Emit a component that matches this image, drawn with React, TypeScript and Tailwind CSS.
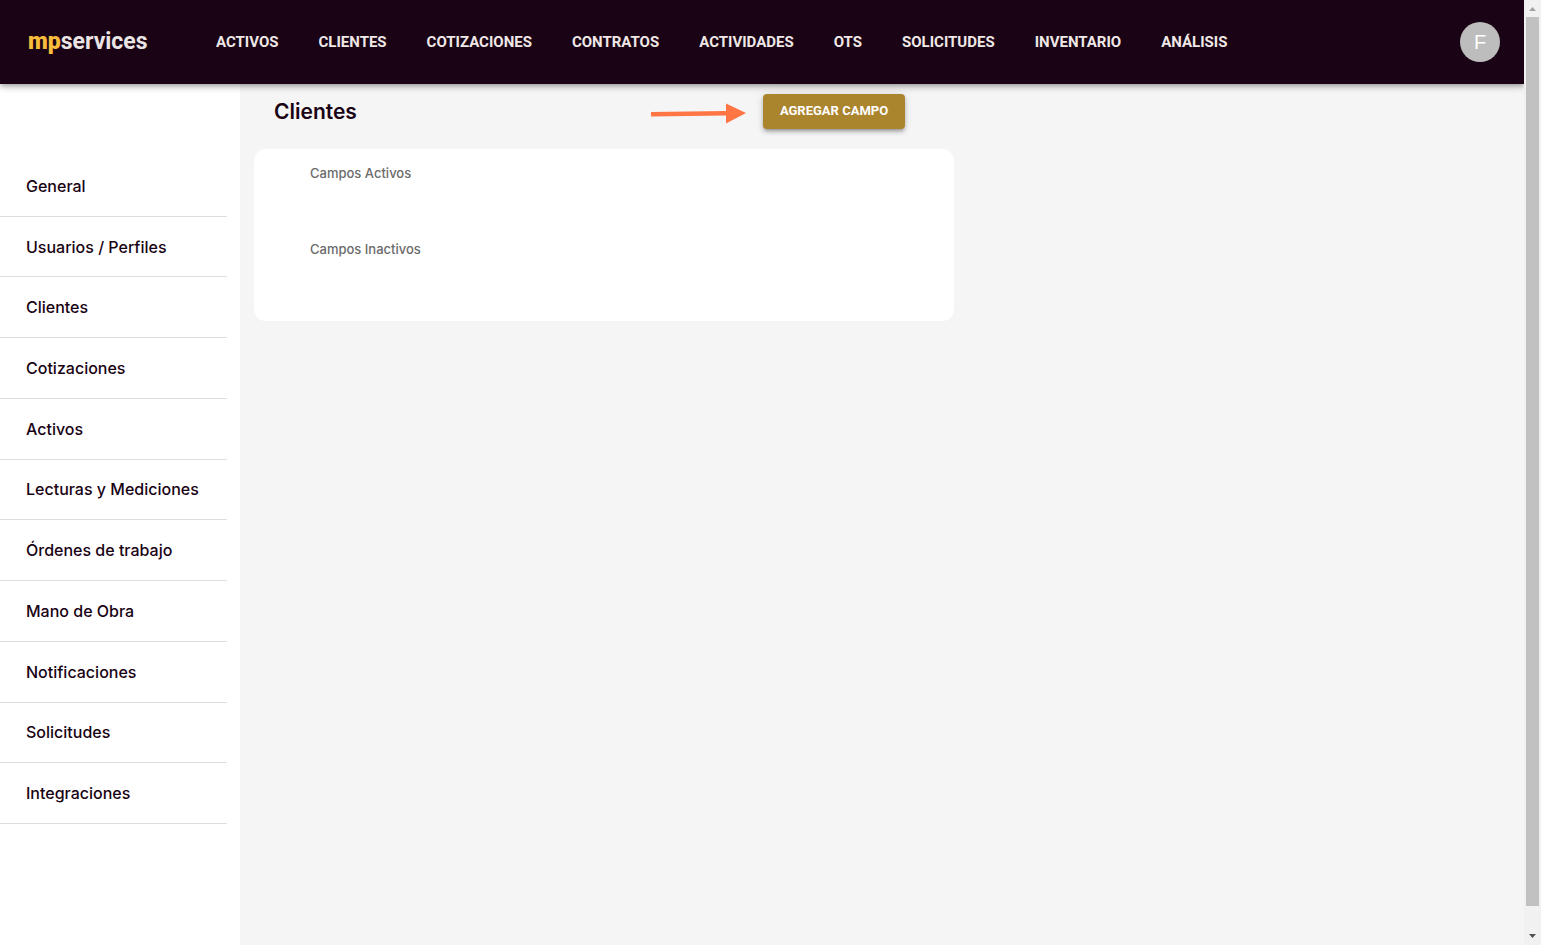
import React from 'react';

const navItems = [
  'ACTIVOS',
  'CLIENTES',
  'COTIZACIONES',
  'CONTRATOS',
  'ACTIVIDADES',
  'OTS',
  'SOLICITUDES',
  'INVENTARIO',
  'ANÁLISIS',
];

const settings = [
  'General',
  'Usuarios / Perfiles',
  'Clientes',
  'Cotizaciones',
  'Activos',
  'Lecturas y Mediciones',
  'Órdenes de trabajo',
  'Mano de Obra',
  'Notificaciones',
  'Solicitudes',
  'Integraciones',
];

function Header() {
  return (
    <header className="relative z-10 flex h-21 shrink-0 items-center bg-[#190314] pl-7 pr-6 shadow-[0_2px_4px_-1px_rgba(0,0,0,0.2),0_4px_5px_rgba(0,0,0,0.14),0_1px_10px_rgba(0,0,0,0.12)]">
      <a href="#inicio" className="w-[188px] shrink-0 font-['Roboto',sans-serif] text-[23px] leading-7 font-bold text-[#ebe4e4]">
        <span className="font-black text-[#f9bc3c]">mp</span>services
      </a>
      <nav className="flex gap-10 font-['Roboto',sans-serif] text-[15px] leading-5 font-bold whitespace-nowrap text-[#f0e8e6]">
        {navItems.map((item) => (
          <a key={item} href="#modulo">{item}</a>
        ))}
      </nav>
      <button
        type="button"
        aria-label="Cuenta"
        className="ml-auto flex size-10 shrink-0 items-center justify-center rounded-full bg-[#bdbdbd] font-['Liberation_Sans',sans-serif] text-xl text-white"
      >
        F
      </button>
    </header>
  );
}

function Sidebar() {
  return (
    <aside className="w-60 shrink-0 bg-white pt-[72px] pr-[13px]">
      <ul className="grid h-[668px] auto-rows-fr text-base leading-6 font-medium text-[#190314]">
        {settings.map((label) => (
          <li key={label} className="flex border-b border-[#dedede]">
            <a href="#ajustes" className="flex flex-1 items-center pl-[26px]">{label}</a>
          </li>
        ))}
      </ul>
    </aside>
  );
}

/* Marker that points at the add button */
function Arrow() {
  return (
    <svg width="96" height="22" viewBox="0 0 96 22" className="mr-4 ml-auto" aria-hidden="true">
      <path d="M0 10L75 9V13.500L0 14.500Z" fill="#ff7543" />
      <path d="M75 1.500L95 11L75 21.500Z" fill="#ff7543" />
    </svg>
  );
}

function Scrollbar() {
  return (
    <div className="flex w-[17px] shrink-0 flex-col items-center bg-[#f1f1f1]" aria-hidden="true">
      <svg width="17" height="17" viewBox="0 0 17 17">
        <path d="M5 11h7l-3.500-4z" fill="#a3a3a3" />
      </svg>
      <div className="w-[13px] flex-1 bg-[#c1c1c1]" />
      <div className="h-[22px]" />
      <svg width="17" height="17" viewBox="0 0 17 17">
        <path d="M5 6h7l-3.500 4z" fill="#505050" />
      </svg>
    </div>
  );
}

export default function App() {
  return (
    <div className="flex min-h-screen font-['Inter',sans-serif]">
      <div className="flex min-w-0 flex-1 flex-col overflow-x-clip bg-[#f5f5f5]">
        <Header />
        <div className="flex flex-1">
          <Sidebar />
          <main className="flex-1 pl-3.5">
            <div className="max-w-[700px]">
              <div className="flex h-[65px] items-start pt-2.5 pr-[49px] pl-5">
                <h1 className="text-[21px] leading-9 font-semibold text-[#190314]">Clientes</h1>
                <div className="ml-auto flex pt-2"><Arrow /></div>
                <button
                  type="button"
                  className="h-[35px] w-[142px] rounded bg-[#ab842e] pb-0.5 font-['Roboto',sans-serif] text-[13px] font-bold text-white shadow-[0_3px_3px_-2px_rgba(0,0,0,0.2),0_3px_4px_rgba(0,0,0,0.2),0_1px_8px_rgba(0,0,0,0.12)]"
                >
                  AGREGAR CAMPO
                </button>
              </div>
              <section className="rounded-xl bg-white pt-[14px] pl-14 text-[13px] leading-5 font-medium text-[#6b6b6b]">
                <h2 className="h-[76px]">Campos Activos</h2>
                <h2 className="h-[82px]">Campos Inactivos</h2>
              </section>
            </div>
          </main>
        </div>
      </div>
      <Scrollbar />
    </div>
  );
}
